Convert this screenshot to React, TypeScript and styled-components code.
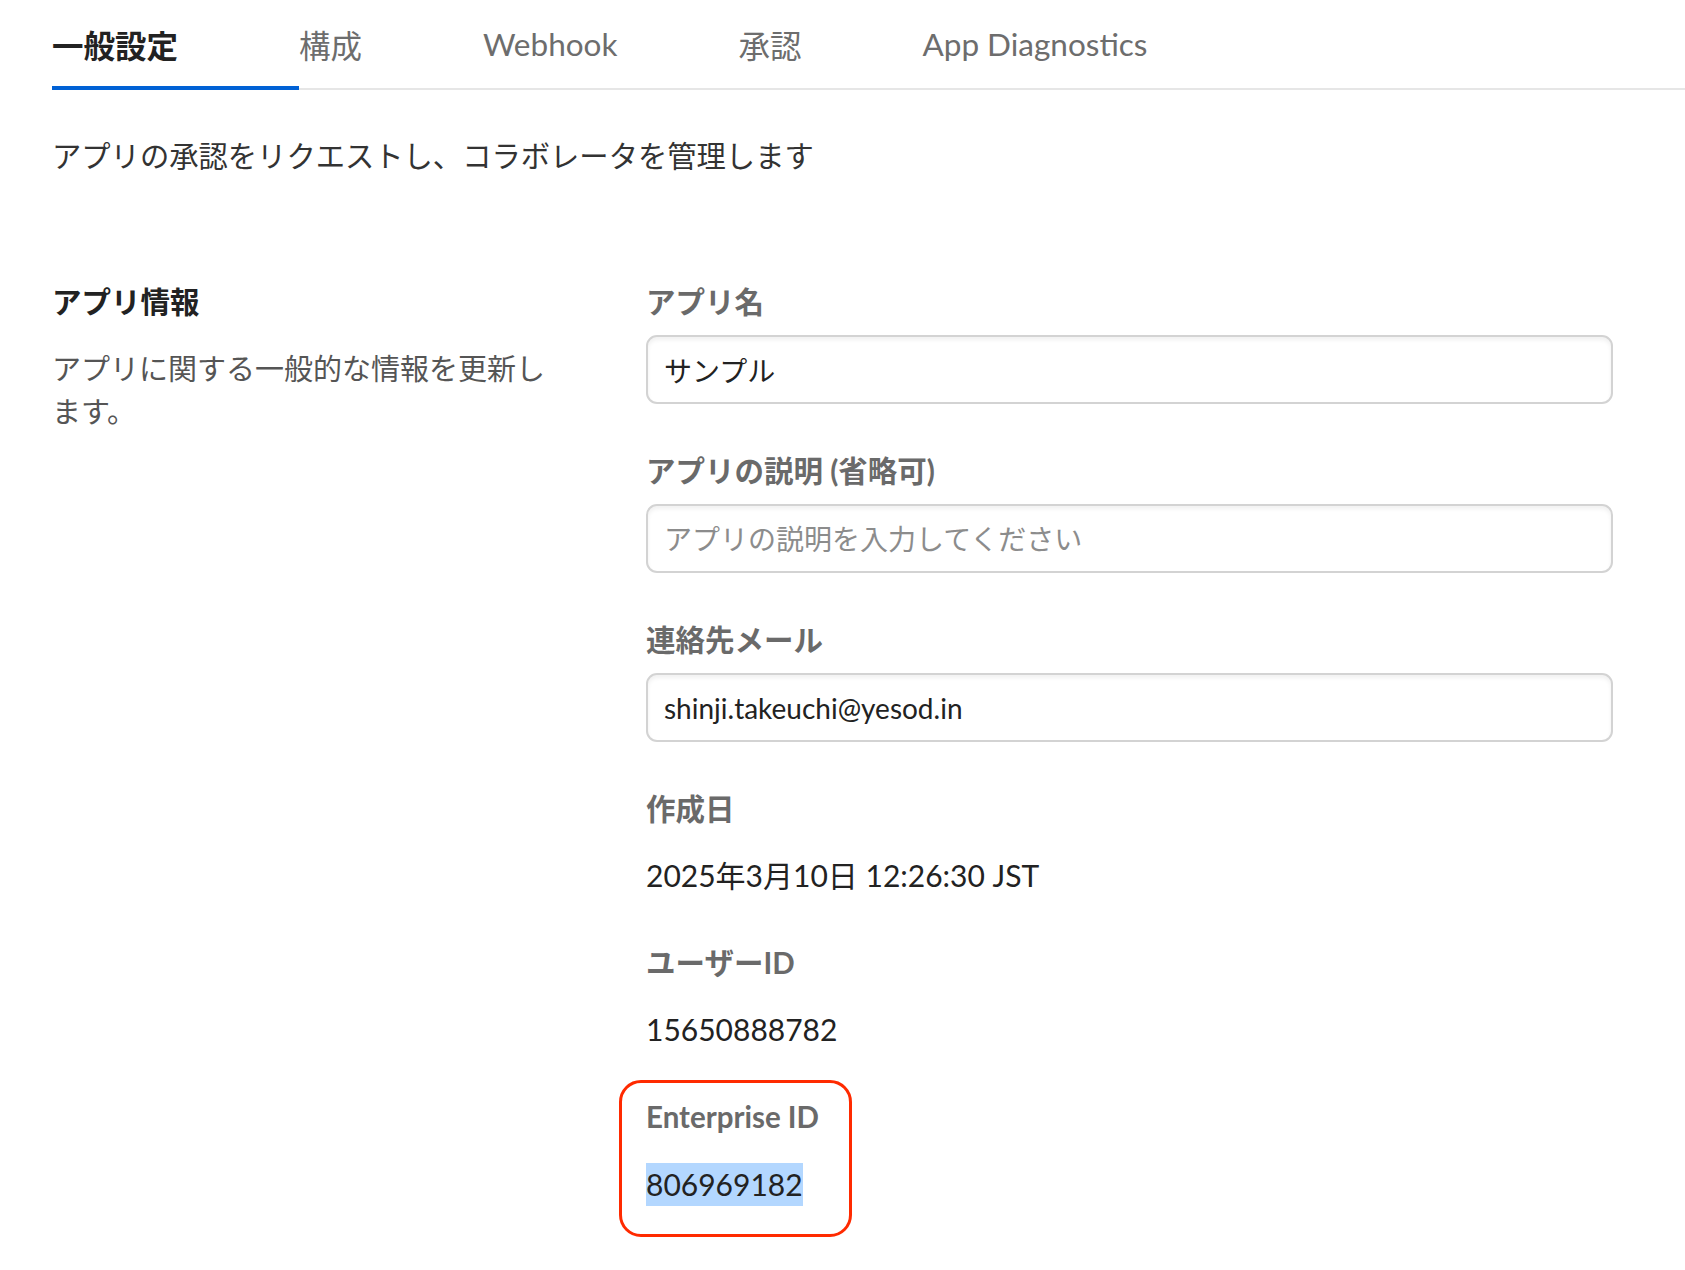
import React from "react";
import styled, { createGlobalStyle } from "styled-components";

const GlobalStyle = createGlobalStyle`
  html, body {
    margin: 0;
    padding: 0;
    background: #ffffff;
  }
  body {
    font-family: Lato, "Noto Sans CJK JP", "Noto Sans", sans-serif;
    color: #222;
    -webkit-font-smoothing: antialiased;
  }
  * { box-sizing: border-box; }
`;

const Page = styled.div`
  padding-left: 52px;
  padding-bottom: 40px;
`;

const TabBar = styled.nav`
  display: flex;
  border-bottom: 2px solid #e6e6e6;
`;

const Tab = styled.div<{ $active?: boolean }>`
  display: flex;
  align-items: center;
  height: 90px;
  padding: 2px 121px 0 0;
  margin-bottom: -2px;
  border-bottom: 4px solid ${(p) => (p.$active ? "#0061d5" : "transparent")};
  font-size: 31.5px;
  font-weight: ${(p) => (p.$active ? 700 : 400)};
  color: ${(p) => (p.$active ? "#222" : "#6d6d6d")};
  white-space: nowrap;
  cursor: pointer;
`;

const Intro = styled.p`
  margin: 45px 0 0;
  font-size: 29.3px;
  line-height: 42px;
  color: #333;
`;

const Section = styled.section`
  display: grid;
  grid-template-columns: 594px 967px;
  margin-top: 105px;
`;

const SectionInfo = styled.div`
  display: flex;
  flex-direction: column;
  gap: 25px;
`;

const SectionTitle = styled.h2`
  margin: 0;
  font-size: 29.5px;
  line-height: 40px;
  font-weight: 700;
  color: #222;
`;

const SectionText = styled.p`
  margin: 0;
  max-width: 510px;
  font-size: 29px;
  line-height: 43px;
  color: #555;
`;

const Fields = styled.div`
  display: flex;
  flex-direction: column;
`;

const Field = styled.div<{ $spacing: number }>`
  position: relative;
  display: flex;
  flex-direction: column;
  margin-bottom: ${(p) => p.$spacing}px;
`;

const Label = styled.label<{ $gap: number }>`
  display: block;
  margin-bottom: ${(p) => p.$gap}px;
  font-size: 29.5px;
  line-height: 40px;
  font-weight: 700;
  color: #6a6a6a;
`;

const TextInput = styled.input`
  width: 100%;
  height: 69px;
  padding: 0 16px;
  border: 2px solid #d3d3d3;
  border-radius: 11px;
  box-shadow: inset 0 3px 4px rgba(0, 0, 0, 0.06);
  background: #fff;
  font-family: inherit;
  font-size: 28px;
  color: #222;
  outline: none;

  &::placeholder {
    color: #8c8c8c;
  }
`;

const Value = styled.div`
  font-size: 30px;
  line-height: 69px;
  color: #222;
`;

const Selected = styled.span`
  display: inline-block;
  line-height: 43px;
  vertical-align: middle;
  background: #b3d7ff;
  margin-top: -5px;
`;

/* Red annotation ring drawn over the Enterprise ID field */
const Callout = styled.div`
  position: absolute;
  top: -17px;
  left: -27px;
  width: 233px;
  bottom: -19px;
  border: 3px solid #ff2a00;
  border-radius: 22px;
  pointer-events: none;
`;

const tabs = ["一般設定", "構成", "Webhook", "承認", "App Diagnostics"];

export default function App() {
  return (
    <>
      <GlobalStyle />
      <Page>
        <TabBar>
          {tabs.map((t, i) => (
            <Tab key={t} $active={i === 0}>
              {t}
            </Tab>
          ))}
        </TabBar>

        <Intro>アプリの承認をリクエストし、コラボレータを管理します</Intro>

        <Section>
          <SectionInfo>
            <SectionTitle>アプリ情報</SectionTitle>
            <SectionText>アプリに関する一般的な情報を更新します。</SectionText>
          </SectionInfo>

          <Fields>
            <Field $spacing={47}>
              <Label $gap={13}>アプリ名</Label>
              <TextInput defaultValue="サンプル" />
            </Field>
            <Field $spacing={47}>
              <Label $gap={13}>アプリの説明 (省略可)</Label>
              <TextInput placeholder="アプリの説明を入力してください" />
            </Field>
            <Field $spacing={47}>
              <Label $gap={13}>連絡先メール</Label>
              <TextInput defaultValue="shinji.takeuchi@yesod.in" />
            </Field>
            <Field $spacing={33}>
              <Label $gap={12}>作成日</Label>
              <Value>2025年3月10日 12:26:30 JST</Value>
            </Field>
            <Field $spacing={33}>
              <Label $gap={12}>ユーザーID</Label>
              <Value>15650888782</Value>
            </Field>
            <Field $spacing={0}>
              <Label $gap={12}>Enterprise ID</Label>
              <Value>
                <Selected>806969182</Selected>
              </Value>
              <Callout />
            </Field>
          </Fields>
        </Section>
      </Page>
    </>
  );
}
